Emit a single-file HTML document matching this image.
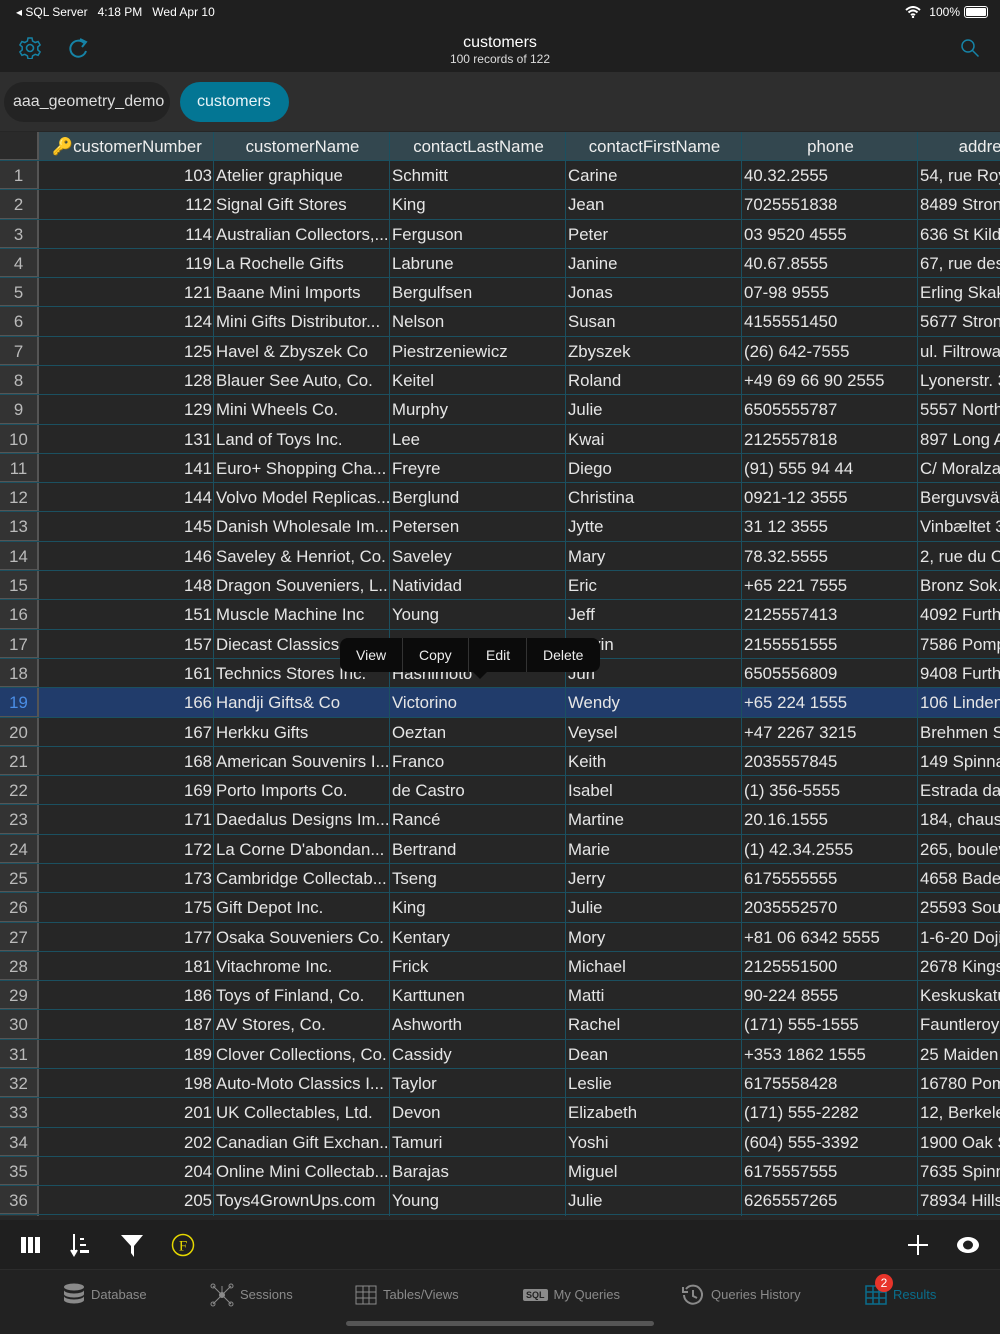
<!DOCTYPE html>
<html><head><meta charset="utf-8"><style>
*{margin:0;padding:0;box-sizing:border-box}
body{width:1000px;height:1334px;background:#262626;font-family:"Liberation Sans",sans-serif;color:#e6e6e6;overflow:hidden;position:relative}
.status{position:absolute;top:0;left:0;right:0;height:24px;background:#1f1f1f;font-size:12px;color:#fff}
.nav{position:absolute;top:24px;left:0;right:0;height:48px;background:#1f1f1f;text-align:center}
.tabs{position:absolute;top:72px;left:0;right:0;height:59px;background:#2e2e2e}
.pill{position:absolute;top:10px;height:40px;border-radius:20px;font-size:16px;line-height:40px;padding:0 12px}
.grid{position:absolute;top:132px;left:0;width:1000px;height:1084px;overflow:hidden}
.row{position:absolute;left:0;width:1060px;height:29.3px;border-bottom:1px solid #1b5060}
.c{position:absolute;top:0;height:100%;border-right:1px solid #1b5060;font-size:16.8px;line-height:29px;white-space:nowrap;overflow:hidden;padding-left:2px}
.idx{left:0;width:39px;background:#333;color:#bbb;text-align:center;padding:0;border-right:2px solid #555;border-bottom:1px solid #555}
.hd .c{background:#33474f;text-align:center;color:#eee}
.sel .c{background:#213c6b}
.sel .idx{color:#4b8ee6;background:#213c6b}
.tb{position:absolute;top:1220px;left:0;right:0;height:50px;background:#1f1f1f}
.tab{position:absolute;top:1270px;left:0;right:0;height:64px;background:#222;font-size:13px;color:#8a8a8a}
.ti{position:absolute;top:13px;height:24px;display:flex;align-items:center;gap:6px;line-height:24px}
</style></head><body>
<div class="status">
<span style="position:absolute;left:16px;top:5px">◂ SQL Server&nbsp;&nbsp; 4:18 PM&nbsp;&nbsp; Wed Apr 10</span>
<span style="position:absolute;right:40px;top:5px">100%</span>
<svg style="position:absolute;left:905px;top:6px" width="16" height="12"><path d="M1 4Q8-2 15 4M3.5 6.5Q8 2.5 12.5 6.5M6 9Q8 7.5 10 9" stroke="#fff" stroke-width="2" fill="none"/><circle cx="8" cy="11" r="1.2" fill="#fff"/></svg>
<div style="position:absolute;right:12px;top:6px;width:24px;height:12px;border:1px solid #fff;border-radius:3px;padding:1px"><div style="background:#fff;height:100%;border-radius:1px"></div></div>
</div>
<div class="nav">
<svg style="position:absolute;left:19px;top:13px" width="22" height="22" viewBox="0 0 22 22"><circle cx="11" cy="11" r="3.5" stroke="#1683a6" stroke-width="1.6" fill="none"/><path d="M9 1h4l.6 3 2.6 1.5 2.9-1 2 3.4-2.3 2v3l2.3 2-2 3.4-2.9-1-2.6 1.5-.6 3H9l-.6-3-2.6-1.5-2.9 1-2-3.4 2.3-2v-3l-2.3-2 2-3.4 2.9 1L8.4 4z" stroke="#1683a6" stroke-width="1.5" fill="none"/></svg>
<svg style="position:absolute;left:68px;top:13px" width="22" height="24" viewBox="0 0 22 24"><path d="M16 6A8 8 0 1 0 18 14" stroke="#1683a6" stroke-width="2" fill="none"/><path d="M12 2l6 3-4 5" stroke="#1683a6" stroke-width="2" fill="none"/></svg>
<div style="font-size:16px;color:#fff;margin-top:10px">customers</div>
<div style="font-size:12px;color:#ddd">100 records of 122</div>
<svg style="position:absolute;right:20px;top:14px" width="20" height="20"><circle cx="8" cy="8" r="6" stroke="#1683a6" stroke-width="1.5" fill="none"/><path d="M12.5 12.5l6 6" stroke="#1683a6" stroke-width="1.5"/></svg>
</div>
<div class="tabs">
<div class="pill" style="left:4px;width:166px;background:#232323;color:#ddd;padding-left:9px">aaa_geometry_demo</div>
<div class="pill" style="left:180px;width:109px;background:#037694;color:#e8f4f8;padding-left:17px">customers</div>
</div>
<div class="grid" id="g"></div>
<div class="tb">
<svg style="position:absolute;left:21px;top:17px" width="20" height="16"><rect x="0" y="0" width="5" height="16" fill="#fff"/><rect x="7" y="0" width="5" height="16" fill="#fff"/><rect x="14" y="0" width="5" height="16" fill="#fff"/></svg>
<svg style="position:absolute;left:70px;top:13px" width="24" height="24"><path d="M4 1v20M1 17l3 5 3-5" stroke="#fff" stroke-width="2" fill="#fff"/><rect x="10" y="5" width="4" height="2" fill="#fff"/><rect x="10" y="11" width="6" height="2" fill="#fff"/><rect x="10" y="17" width="9" height="3" fill="#fff"/></svg>
<svg style="position:absolute;left:121px;top:14px" width="22" height="24"><path d="M0 1h22L13 12v11l-3-4V12z" fill="#fff"/></svg>
<svg style="position:absolute;left:171px;top:13px" width="24" height="24"><circle cx="12" cy="12" r="10.5" stroke="#e6d800" stroke-width="1.5" fill="none"/><text x="12" y="17.5" text-anchor="middle" font-family="Liberation Serif" font-size="15" fill="#e6d800">F</text></svg>
<svg style="position:absolute;left:908px;top:15px" width="20" height="20"><path d="M10 0v20M0 10h20" stroke="#fff" stroke-width="2"/></svg>
<svg style="position:absolute;left:956px;top:16px" width="24" height="18"><ellipse cx="12" cy="9" rx="11" ry="8" fill="#fff"/><ellipse cx="12" cy="9" rx="5" ry="4.5" fill="#1f1f1f"/></svg>
</div>
<div style="position:absolute;top:1269px;left:0;right:0;height:1px;background:#2c2c2c"></div>
<div class="tab">
<div class="ti" style="left:63px"><svg width="22" height="24"><ellipse cx="11" cy="4" rx="10" ry="3.5" fill="#8a8a8a"/><path d="M1 7v4a10 3.5 0 0 0 20 0V7a10 3.5 0 0 1-20 0zM1 13v4a10 3.5 0 0 0 20 0v-4a10 3.5 0 0 1-20 0z" fill="#8a8a8a"/></svg>Database</div>
<div class="ti" style="left:210px"><svg width="24" height="24" stroke="#8a8a8a" fill="none"><path d="M12 12L3 3M12 12l9-9M12 12L3 21M12 12l9 9M12 12V3"/><circle cx="12" cy="12" r="2.5" fill="#8a8a8a"/><circle cx="3" cy="3" r="2"/><circle cx="21" cy="3" r="2"/><circle cx="3" cy="21" r="2"/><circle cx="21" cy="21" r="2"/></svg>Sessions</div>
<div class="ti" style="left:355px"><svg width="22" height="20" stroke="#8a8a8a" fill="none"><rect x="1" y="1" width="20" height="18"/><path d="M1 7h20M1 13h20M8 1v18M14 1v18"/></svg>Tables/Views</div>
<div class="ti" style="left:523px"><span style="background:#8a8a8a;color:#222;font-size:9px;font-weight:bold;padding:0 3px;border-radius:2px;line-height:12px">SQL</span>My Queries</div>
<div class="ti" style="left:681px"><svg width="24" height="24" stroke="#8a8a8a" fill="none" stroke-width="2"><path d="M5 6A9 9 0 1 1 3 12"/><path d="M2 4v5h5M12 7v6l4 2"/></svg>Queries History</div>
<div class="ti" style="left:865px;color:#0a6d8c"><svg width="22" height="20" stroke="#0a6d8c" fill="none" stroke-width="1.5"><rect x="1" y="1" width="20" height="18"/><path d="M1 7h20M1 13h20M8 1v18M14 1v18"/></svg>Results</div>
<div style="position:absolute;left:875px;top:4px;width:18px;height:18px;border-radius:9px;background:#e8342a;color:#fff;font-size:12px;text-align:center;line-height:18px">2</div>
<div style="position:absolute;left:346px;top:51px;width:308px;height:5px;border-radius:3px;background:#555"></div>
</div>
<div style="position:absolute;left:340px;top:638px;width:260px;height:34px;background:#0b0b0b;border-radius:8px;font-size:14px;color:#eee;line-height:34px">
<span style="position:absolute;left:16px">View</span><div style="position:absolute;left:62px;top:0;width:1px;height:34px;background:#333"></div>
<span style="position:absolute;left:79px">Copy</span><div style="position:absolute;left:128px;top:0;width:1px;height:34px;background:#333"></div>
<span style="position:absolute;left:146px">Edit</span><div style="position:absolute;left:186px;top:0;width:1px;height:34px;background:#333"></div>
<span style="position:absolute;left:203px">Delete</span>
<div style="position:absolute;left:133px;top:34px;border:7px solid transparent;border-top-color:#0b0b0b"></div>
</div>
<script>
const d=`103|Atelier graphique|Schmitt|Carine|40.32.2555|54, rue Royale
112|Signal Gift Stores|King|Jean|7025551838|8489 Strong St.
114|Australian Collectors,...|Ferguson|Peter|03 9520 4555|636 St Kilda Road
119|La Rochelle Gifts|Labrune|Janine|40.67.8555|67, rue des Cinquante
121|Baane Mini Imports|Bergulfsen|Jonas|07-98 9555|Erling Skakkes gate
124|Mini Gifts Distributor...|Nelson|Susan|4155551450|5677 Strong St.
125|Havel & Zbyszek Co|Piestrzeniewicz|Zbyszek|(26) 642-7555|ul. Filtrowa 68
128|Blauer See Auto, Co.|Keitel|Roland|+49 69 66 90 2555|Lyonerstr. 34
129|Mini Wheels Co.|Murphy|Julie|6505555787|5557 North Pendale
131|Land of Toys Inc.|Lee|Kwai|2125557818|897 Long Airport
141|Euro+ Shopping Cha...|Freyre|Diego|(91) 555 94 44|C/ Moralzarzal
144|Volvo Model Replicas...|Berglund|Christina|0921-12 3555|Berguvsvägen 8
145|Danish Wholesale Im...|Petersen|Jytte|31 12 3555|Vinbæltet 34
146|Saveley & Henriot, Co.|Saveley|Mary|78.32.5555|2, rue du Commerce
148|Dragon Souveniers, L...|Natividad|Eric|+65 221 7555|Bronz Sok.
151|Muscle Machine Inc|Young|Jeff|2125557413|4092 Furth Circle
157|Diecast Classics Inc.|Leong|Kelvin|2155551555|7586 Pompton St.
161|Technics Stores Inc.|Hashimoto|Juri|6505556809|9408 Furth Circle
166|Handji Gifts& Co|Victorino|Wendy|+65 224 1555|106 Linden Road
167|Herkku Gifts|Oeztan|Veysel|+47 2267 3215|Brehmen St. 121
168|American Souvenirs I...|Franco|Keith|2035557845|149 Spinnaker Dr.
169|Porto Imports Co.|de Castro|Isabel|(1) 356-5555|Estrada da saúde
171|Daedalus Designs Im...|Rancé|Martine|20.16.1555|184, chaussée de
172|La Corne D'abondan...|Bertrand|Marie|(1) 42.34.2555|265, boulevard
173|Cambridge Collectab...|Tseng|Jerry|6175555555|4658 Baden Av.
175|Gift Depot Inc.|King|Julie|2035552570|25593 South Bay
177|Osaka Souveniers Co.|Kentary|Mory|+81 06 6342 5555|1-6-20 Dojima
181|Vitachrome Inc.|Frick|Michael|2125551500|2678 Kingston Rd.
186|Toys of Finland, Co.|Karttunen|Matti|90-224 8555|Keskuskatu 45
187|AV Stores, Co.|Ashworth|Rachel|(171) 555-1555|Fauntleroy Circus
189|Clover Collections, Co.|Cassidy|Dean|+353 1862 1555|25 Maiden Lane
198|Auto-Moto Classics I...|Taylor|Leslie|6175558428|16780 Pompton St.
201|UK Collectables, Ltd.|Devon|Elizabeth|(171) 555-2282|12, Berkeley Gardens
202|Canadian Gift Exchan...|Tamuri|Yoshi|(604) 555-3392|1900 Oak St.
204|Online Mini Collectab...|Barajas|Miguel|6175557555|7635 Spinnaker Dr.
205|Toys4GrownUps.com|Young|Julie|6265557265|78934 Hillside Dr.
209|Mini Caravy|Citeaux|Frédérique|88.60.1555|24, place Kléber`.split('\n');
const X=[39,214,390,566,742,918,1058];
let h='<div class="row hd" style="top:0;height:29px"><div class="c idx" style="background:#2a2a2a"></div>';
const H=['customerNumber','customerName','contactLastName','contactFirstName','phone','address'];
H.forEach((t,i)=>{h+=`<div class="c" style="left:${X[i]}px;width:${X[i+1]-X[i]}px">${i==0?'<span style="color:#e2b400">&#x1F511;</span>customerNumber':t}</div>`});
h+='</div>';
d.forEach((r,k)=>{const f=r.split('|');const top=29+k*29.29;
h+=`<div class="row${k==18?' sel':''}" style="top:${top}px"><div class="c idx">${k+1}</div>`;
f.forEach((t,i)=>{h+=`<div class="c" style="left:${X[i]}px;width:${(i==5?200:X[i+1]-X[i])}px;${i==0?'text-align:right;padding-right:1px':''}">${t.replace(/&/g,'&amp;')}</div>`});
h+='</div>'});
document.getElementById('g').innerHTML=h;
</script>
</body></html>
